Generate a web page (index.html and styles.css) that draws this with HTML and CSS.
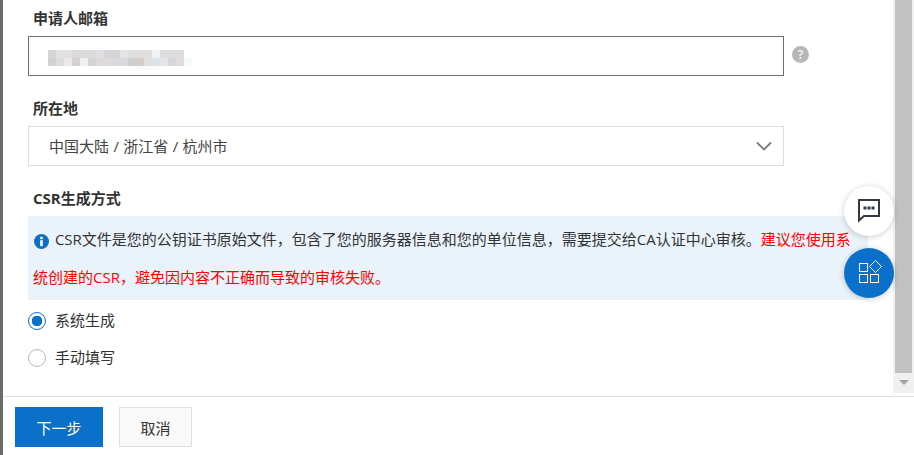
FILE: index.html
```html
<!DOCTYPE html>
<html lang="zh-CN">
  <head>
    <meta charset="UTF-8" />
    <meta name="viewport" content="width=device-width, initial-scale=1.0" />
    <title>申请证书</title>
    <link rel="stylesheet" href="styles.css">
  </head>
  <body>
    <div class="panel">
      <div class="body">
        <div class="form">
          <label class="label label-first">申请人邮箱</label>
          <div class="field-row">
            <div class="input">
              <!-- blurred email -->
              <svg class="blur" width="148" height="24" viewBox="0 0 148 24">
                <rect x="0" y="0" width="8" height="8" fill="#d6d6d6"/>
                <rect x="8" y="0" width="16" height="8" fill="#e2e2e2"/>
                <rect x="24" y="0" width="24" height="8" fill="#dcdada"/>
                <rect x="48" y="0" width="8" height="8" fill="#e0e0e2"/>
                <rect x="56" y="0" width="16" height="8" fill="#d4d6da"/>
                <rect x="72" y="0" width="8" height="8" fill="#e4e4e4"/>
                <rect x="0" y="8" width="8" height="8" fill="#d2d2d2"/>
                <rect x="8" y="8" width="8" height="8" fill="#dcdcdc"/>
                <rect x="16" y="8" width="8" height="8" fill="#eaeaea"/>
                <rect x="24" y="8" width="8" height="8" fill="#d4d0d0"/>
                <rect x="32" y="8" width="8" height="8" fill="#f0f0f0"/>
                <rect x="40" y="8" width="8" height="8" fill="#d2d4d8"/>
                <rect x="48" y="8" width="16" height="8" fill="#dedada"/>
                <rect x="64" y="8" width="16" height="8" fill="#d8dade"/>
                <rect x="80" y="0" width="24" height="8" fill="#dedede"/>
                <rect x="104" y="0" width="8" height="8" fill="#f2f2f2"/>
                <rect x="112" y="0" width="24" height="8" fill="#dcdcdc"/>
                <rect x="80" y="8" width="8" height="8" fill="#ccd0cc"/>
                <rect x="88" y="8" width="8" height="8" fill="#d6cec6"/>
                <rect x="96" y="8" width="8" height="8" fill="#e0e0e0"/>
                <rect x="104" y="8" width="8" height="8" fill="#dce4ea"/>
                <rect x="112" y="8" width="8" height="8" fill="#e6e6e6"/>
                <rect x="120" y="8" width="8" height="8" fill="#d6d8de"/>
                <rect x="128" y="8" width="8" height="8" fill="#e4dcdc"/>
                <rect x="136" y="8" width="8" height="8" fill="#f6fafc"/>
                <rect x="88" y="16" width="24" height="4" fill="#fafafa"/>
              </svg>
            </div>
            <span class="help">?</span>
          </div>

          <label class="label">所在地</label>
          <div class="select">
            <span class="select-text">中国大陆 / 浙江省 / 杭州市</span>
            <svg class="caret" width="16" height="10" viewBox="0 0 16 10">
              <path d="M1 1.5 L8 8.5 L15 1.5" fill="none" stroke="#7a7a7a" stroke-width="1.8"/>
            </svg>
          </div>

          <label class="label">CSR生成方式</label>
          <div class="alert">
            <svg class="info" width="15" height="15" viewBox="0 0 15 15">
              <circle cx="7.5" cy="7.5" r="7.5" fill="#0f6fc6"/>
              <rect x="6.2" y="2.8" width="2.6" height="2.4" fill="#fff"/>
              <rect x="6.2" y="6.2" width="2.6" height="6" fill="#fff"/>
            </svg>
            CSR文件是您的公钥证书原始文件，包含了您的服务器信息和您的单位信息，需要提交给CA认证中心审核。<span class="warn">建议您使用系<br>统创建的CSR，避免因内容不正确而导致的审核失败。</span>
          </div>

          <div class="radio-row">
            <span class="radio radio-on"></span>
            <span class="radio-text">系统生成</span>
          </div>
          <div class="radio-row">
            <span class="radio"></span>
            <span class="radio-text">手动填写</span>
          </div>
        </div>

        <div class="scrollbar">
          <div class="thumb"></div>
          <div class="arrow"></div>
        </div>
      </div>

      <div class="footer">
        <button class="btn btn-primary">下一步</button>
        <button class="btn">取消</button>
      </div>
    </div>

    <div class="float-btn float-chat">
      <svg width="22" height="22" viewBox="0 0 22 22">
        <path d="M1 0 H21 V16 H6 L1 20.5 Z" fill="none" stroke="#333a44" stroke-width="2"/>
        <rect x="5.5" y="6.5" width="3" height="3" fill="#333a44"/>
        <rect x="9.5" y="6.5" width="3" height="3" fill="#333a44"/>
        <rect x="13.5" y="6.5" width="3" height="3" fill="#333a44"/>
      </svg>
    </div>
    <div class="float-btn float-apps">
      <svg width="24" height="24" viewBox="0 0 24 24">
        <g fill="none" stroke="#fff" stroke-width="1">
          <rect x="2.5" y="2.5" width="8" height="8"/>
          <rect x="2.5" y="13.5" width="8" height="8"/>
          <rect x="13.5" y="13.5" width="8" height="8"/>
          <path d="M18.5 -0.5 L24.5 5.5 L18.5 11.5 L12.5 5.5 Z"/>
        </g>
      </svg>
    </div>
  </body>
</html>
```

FILE: styles.css
```css
html,
body {
  margin: 0;
  height: 100%;
  overflow: hidden;
}

body {
  background: #fff;
  color: #333;
  font-family: "Open Sans", "Noto Sans CJK SC", sans-serif;
  font-size: 15px;
}

.panel {
  display: flex;
  flex-direction: column;
  height: 455px;
  border-left: 3px solid #6b6b6b;
  box-sizing: border-box;
}

.body {
  display: flex;
  height: 396px;
}

.form {
  flex: 1;
  padding-left: 25px;
  padding-right: 25px;
  min-width: 0;
}

.label {
  display: block;
  margin: 23px 0 7px 5px;
  height: 20px;
  line-height: 18px;
  font-weight: 700;
  color: #333;
}

.label-first {
  margin-top: 9px;
}

.field-row {
  display: flex;
  align-items: center;
  gap: 8px;
}

.input,
.select {
  box-sizing: border-box;
  width: 756px;
  height: 40px;
  display: flex;
  align-items: center;
}

.input {
  border: 1px solid #6f6f6f;
  padding-left: 19px;
}

.blur {
  margin-top: 12px;
}

.help {
  width: 17px;
  height: 17px;
  margin-bottom: 4px;
  border-radius: 50%;
  background: #b7b7b7;
  color: #eee;
  font-size: 12px;
  font-weight: 700;
  line-height: 17px;
  text-align: center;
}

.select {
  justify-content: space-between;
  border: 1px solid #dedede;
  padding: 0 11px 0 20px;
  color: #444;
}

.select-text {
  margin-bottom: 2px;
  word-spacing: 0.5px;
}

.alert {
  box-sizing: border-box;
  width: 840px;
  height: 84px;
  padding: 4px 5px;
  background: #eaf2fa;
  line-height: 38px;
  white-space: nowrap;
}

.info {
  vertical-align: -4px;
  margin-left: 1px;
  margin-right: 2px;
}

.warn {
  color: #f00;
}

.radio-row {
  display: flex;
  align-items: center;
  gap: 9px;
  height: 37px;
  color: #333;
}

.radio-text {
  margin-bottom: 2px;
}

.alert + .radio-row {
  margin-top: 2px;
}

.radio {
  box-sizing: border-box;
  width: 18px;
  height: 18px;
  border: 1px solid #b9b9b9;
  border-radius: 50%;
  background: #fff;
}

.radio-on {
  border: 1.5px solid #0a70c9;
  background: radial-gradient(circle, #0a70c9 0 5px, #fff 5.5px);
}

.scrollbar {
  box-sizing: border-box;
  width: 21px;
  height: 393px;
  flex: none;
  padding: 0 2px;
  background: #f0f0f0;
}

.thumb {
  height: 373px;
  background: #c1c1c1;
}

.arrow {
  width: 0;
  height: 0;
  margin: 7px auto 0;
  border-left: 5px solid transparent;
  border-right: 5px solid transparent;
  border-top: 5px solid #a3a3a3;
}

.footer {
  flex: 1;
  display: flex;
  align-items: flex-start;
  gap: 16px;
  padding: 10px 12px 0;
  border-top: 1px solid #e0e0e0;
}

.btn {
  box-sizing: border-box;
  height: 40px;
  width: 73px;
  border: 1px solid #e0e0e0;
  background: #f9f9f9;
  color: #333;
  font: inherit;
}

.btn-primary {
  width: 88px;
  border: 0;
  background: #0a70c9;
  color: #fff;
}

.float-btn {
  position: absolute;
  left: 844px;
  width: 50px;
  height: 50px;
  border-radius: 50%;
  display: flex;
  align-items: center;
  justify-content: center;
  box-shadow: 0 1px 6px rgba(0, 0, 0, 0.2);
}

.float-btn svg {
  overflow: visible;
}

.float-chat {
  top: 186px;
  background: #fff;
}

.float-apps {
  top: 248px;
  background: #0a70c9;
}
```
